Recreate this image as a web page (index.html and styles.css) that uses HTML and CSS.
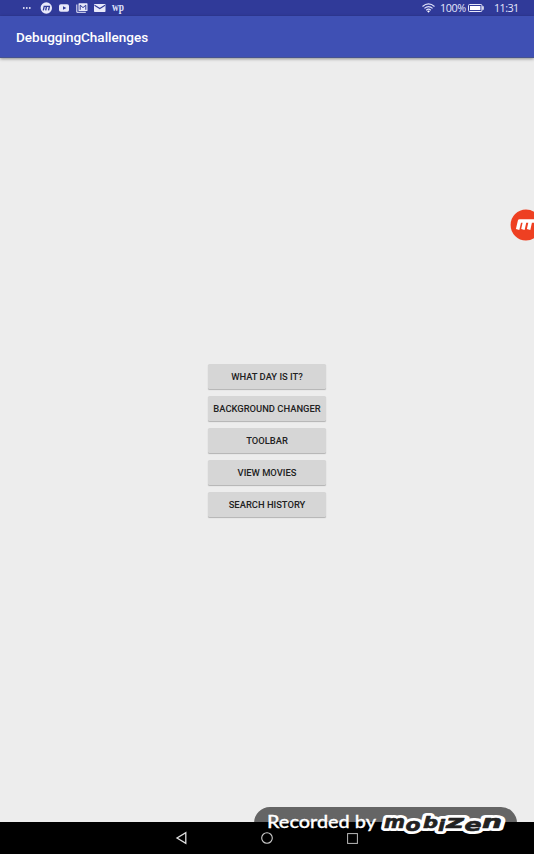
FILE: index.html
```html
<!DOCTYPE html>
<html lang="en">
<head>
<meta charset="utf-8">
<title>DebuggingChallenges</title>
<link rel="stylesheet" href="styles.css">
</head>
<body>
<div class="device">
  <header class="status">
    <div class="notifications">
      <svg width="104" height="16" viewBox="22 0 104 16" aria-hidden="true">
        <g fill="#e8e9fa">
          <circle cx="23.8" cy="8" r=".9"/><circle cx="26.8" cy="8" r=".9"/><circle cx="29.8" cy="8" r=".9"/>
          <circle cx="46.3" cy="8" r="5.7"/>
          <rect x="59" y="4.2" width="10" height="7.5" rx="1.8"/>
          <rect x="78.5" y="3.3" width="9" height="7.7" rx=".6"/>
          <rect x="94" y="4" width="11.5" height="8" rx=".7"/>
        </g>
        <path d="M43.3 10.3l.9-4h5.2l-.9 4M46.5 6.5l-.8 3.8" fill="none" stroke="#303a99" stroke-width="1.3"/>
        <path d="M63 6.2v3.6L66.3 8z" fill="#303a99"/>
        <path d="M76.8 4.5v7.8h9" fill="none" stroke="#e8e9fa"/>
        <path d="M80.2 9.8V5.2L83 7.6l2.8-2.4v4.6" fill="none" stroke="#303a99"/>
        <path d="M94.5 5.2l5.3 3.3 5.3-3.3" fill="none" stroke="#303a99" stroke-width="1.1"/>
        <text class="wp" x="112" y="11" textLength="12" lengthAdjust="spacingAndGlyphs">wp</text>
      </svg>
    </div>
    <div class="system">
      <svg class="wifi" width="13" height="10" viewBox="0 0 13 10" aria-hidden="true">
        <g fill="none" stroke="#dfe2fa" stroke-width="1.15"><path d="M.5 3.5Q6.5-1.7 12.5 3.5M2.4 5.4Q6.5 1.8 10.6 5.4M4.2 7.2Q6.5 5.2 8.8 7.2"/></g>
        <path d="M5 8.1q1.5-1 3 0L6.5 9.7z" fill="#fff"/>
      </svg>
      <span class="percent">100%</span>
      <svg class="battery" width="16" height="8" viewBox="0 0 16 8" aria-hidden="true">
        <rect x=".5" y=".5" width="13.4" height="7" rx="1" fill="none" stroke="#e8e9fa"/>
        <path d="M2 2h10.4v4H2zM14.3 2.3h1.4v3.4h-1.4z" fill="#fff"/>
      </svg>
      <span class="clock">11:31</span>
    </div>
  </header>
  <div class="toolbar"><h1>DebuggingChallenges</h1></div>
  <main class="content">
    <button>WHAT DAY IS IT?</button>
    <button>BACKGROUND CHANGER</button>
    <button>TOOLBAR</button>
    <button>VIEW MOVIES</button>
    <button>SEARCH HISTORY</button>
  </main>
  <nav class="navbar">
    <svg width="12" height="14" viewBox="0 0 12 14"><path d="M10.8 1.7v10.6L2 7z" fill="none" stroke="#ddd" stroke-width="1.3"/></svg>
    <svg width="12" height="12" viewBox="0 0 12 12"><circle cx="6" cy="6" r="5.3" fill="none" stroke="#ccc" stroke-width="1.1"/></svg>
    <svg width="11" height="11" viewBox="0 0 11 11"><rect x=".6" y=".6" width="9.8" height="9.8" fill="none" stroke="#bbb"/></svg>
  </nav>
  <div class="recorder">
    <svg width="24" height="32" viewBox="0 0 24 32" aria-hidden="true">
      <circle cx="16" cy="16" r="15.4" fill="#ee4022"/>
      <path d="M7.6 20.5l2-8.5H24M14.8 12l-1.9 8.5M20.5 12l-1.9 8.5M24 20.5" fill="none" stroke="#fff" stroke-width="3.5" stroke-linejoin="round"/>
    </svg>
  </div>
  <div class="watermark">
    <svg width="110" height="30" viewBox="0 0 110 30">
      <text class="credit" x="0" y="21" textLength="109" lengthAdjust="spacingAndGlyphs">Recorded by</text>
    </svg>
    <svg class="brand" width="126" height="24" viewBox="0 0 126 24">
      <g id="letters" class="brand-text">
        <text x="3" y="16.5" textLength="21" lengthAdjust="spacingAndGlyphs">m</text>
        <text x="24.5" y="19.5" textLength="15" lengthAdjust="spacingAndGlyphs">o</text>
        <text class="tall" x="42" y="17" textLength="15" lengthAdjust="spacingAndGlyphs">b</text>
        <text class="tall" x="57" y="19.5" textLength="7" lengthAdjust="spacingAndGlyphs">i</text>
        <text x="65" y="17" textLength="18" lengthAdjust="spacingAndGlyphs">z</text>
        <text x="83.5" y="19.5" textLength="17" lengthAdjust="spacingAndGlyphs">e</text>
        <text x="101" y="16.5" textLength="20" lengthAdjust="spacingAndGlyphs">n</text>
      </g>
      <use href="#letters" class="face"/>
    </svg>
  </div>
</div>
</body>
</html>
```
FILE: styles.css
```css
* { box-sizing: border-box; }
body { margin: 0; font-family: Roboto, sans-serif; }
.device { position: relative; width: 534px; height: 854px; overflow: hidden; display: flex; flex-direction: column; background: #ededed; }
.status { height: 16px; flex: none; display: flex; justify-content: space-between; padding: 0 16px 0 22px; background: #303a99; color: #e4e6fa; }
.notifications svg { display: block; }
.wp { font: bold 12px "Liberation Serif", serif; fill: #dfe2fa; }
.system { display: flex; align-items: center; font: 10.8px/16px "Open Sans", sans-serif; }
.wifi { margin-right: 5px; }
.percent { width: 25px; letter-spacing: -.4px; white-space: nowrap; }
.battery { margin-left: 3px; }
.clock { width: 24px; margin-left: 10px; letter-spacing: -.6px; white-space: nowrap; }
.toolbar { height: 42px; flex: none; display: flex; align-items: center; padding: 0 16px; background: #3f50b4; border-bottom: 1px solid #46538f; box-shadow: 0 1px 3px rgba(0,0,0,.4); }
h1 { margin: 0; padding-top: 1px; color: #fff; font-size: 13.5px; line-height: 16px; font-weight: 500; }
.content { flex: 1; display: flex; flex-direction: column; align-items: center; justify-content: center; gap: 7px; }
button { width: 118px; height: 25px; padding: 0; border: 0; border-radius: 1.5px; background: #d6d6d6; box-shadow: 0 1px 1px rgba(0,0,0,.25); color: #222; font: 500 9.4px/25px Roboto, sans-serif; white-space: nowrap; }
.navbar { height: 32px; flex: none; display: flex; align-items: center; justify-content: center; gap: 74px; padding-right: 2px; background: #000; }
.recorder { position: absolute; right: 0; top: 209px; height: 32px; }
.watermark { position: absolute; left: 254px; top: 807px; width: 263px; height: 32px; display: flex; padding-left: 13px; border-radius: 16px; background: linear-gradient(#656565 15px, transparent 15px); color: #fff; }
.credit { font: 500 18px Lato, sans-serif; fill: #fff; stroke: #fff; stroke-width: .3px; }
.brand { margin: 4px 0 0 4px; overflow: visible; stroke: #fff; stroke-width: 6px; stroke-linejoin: round; }
.brand-text text { font: italic bold 17px "DejaVu Sans", sans-serif; fill: #222; stroke: inherit; stroke-width: inherit; }
.brand-text .tall { font-size: 15px; }
.brand .face { stroke: #222; stroke-width: .6px; }
```
